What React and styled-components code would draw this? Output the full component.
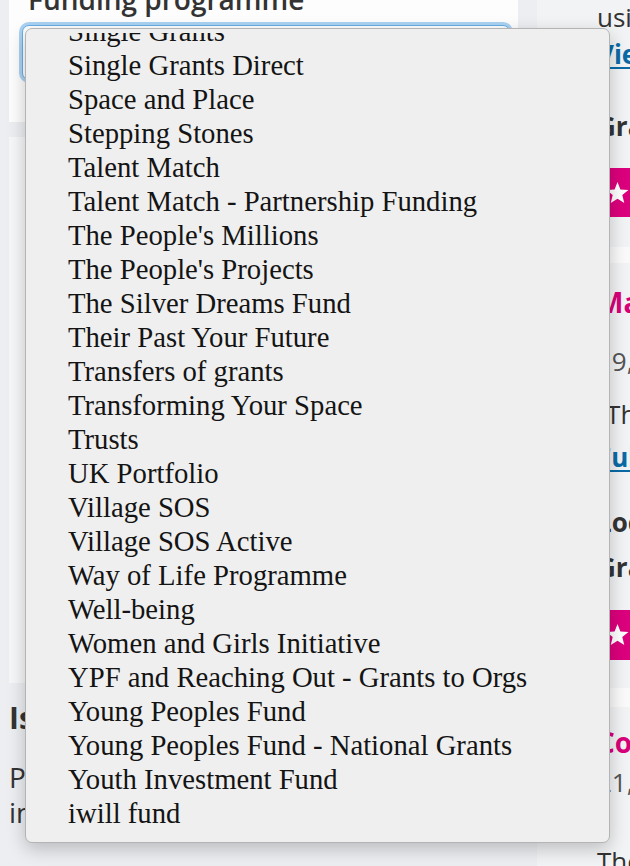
import React from 'react';
import styled, { createGlobalStyle } from 'styled-components';

const programmes = [
	'Single Grants',
	'Single Grants Direct',
	'Space and Place',
	'Stepping Stones',
	'Talent Match',
	'Talent Match - Partnership Funding',
	"The People's Millions",
	"The People's Projects",
	'The Silver Dreams Fund',
	'Their Past Your Future',
	'Transfers of grants',
	'Transforming Your Space',
	'Trusts',
	'UK Portfolio',
	'Village SOS',
	'Village SOS Active',
	'Way of Life Programme',
	'Well-being',
	'Women and Girls Initiative',
	'YPF and Reaching Out - Grants to Orgs',
	'Young Peoples Fund',
	'Young Peoples Fund - National Grants',
	'Youth Investment Fund',
	'iwill fund',
	'iwill Fund Round 2',
];

const Star = () => (
	<svg width="26" height="26" viewBox="0 0 24 24">
		<polygon
			fill="#fff"
			points="12,1.5 14.8,8.6 22.5,9.1 16.6,14 18.5,21.6 12,17.4 5.5,21.6 7.4,14 1.5,9.1 9.2,8.6"
		/>
	</svg>
);

export default function App() {
	return (
		<>
			<GlobalStyle />
			<Page>
				<LeftColumn>
					<FilterCard>
						<FieldLabel>Funding programme</FieldLabel>
						<SelectBox />
					</FilterCard>
					<ResultsCard />
					<SideHeading>Is your project eligible?</SideHeading>
					<SideText>
						Please read our guidance notes before you apply, as
						<br />
						in most cases only one application is allowed.
					</SideText>
				</LeftColumn>

				<RightColumn>
					<Line $mt={-1}>using the grant to</Line>
					<Link $mt={1}>View this project</Link>
					<Strong $mt={36}>Grant amount: £9,800</Strong>
					<Rating $mt={24} $h={49}>
						<Star />
					</Rating>
					<Divider $mt={30} $h={16} />

					<Title $mt={21}>Making Music Together</Title>
					<DateLine $mt={23}>19, 2015</DateLine>
					<Line $mt={17}>“The group will run weekly</Line>
					<Link $mt={7}>Full details</Link>
					<Strong $mt={29}>Local authority</Strong>
					<Strong $mt={9}>Grant amount: £4,500</Strong>
					<Rating $mt={25} $h={50}>
						<Star />
					</Rating>
					<Divider $mt={28} $h={19} />

					<Title $mt={17}>Community Garden</Title>
					<DateLine $mt={4}>21, 2016</DateLine>
					<Line $mt={43}>The project will</Line>
				</RightColumn>

				<Dropdown>
					<OptionViewport>
						<OptionList>
							{programmes.map((name) => (
								<Option key={name}>{name}</Option>
							))}
						</OptionList>
					</OptionViewport>
				</Dropdown>
			</Page>
		</>
	);
}

const GlobalStyle = createGlobalStyle`
	html, body {
		margin: 0;
		padding: 0;
	}
	body {
		background: #eceef1;
		font-family: "Open Sans", "Liberation Sans", sans-serif;
		color: #333;
		overflow: hidden;
	}
`;

const Page = styled.div`
	position: relative;
	display: grid;
	grid-template-columns: 509px 1fr;
	column-gap: 19px;
	padding-left: 9px;
	height: 866px;
	overflow: hidden;
`;

const LeftColumn = styled.div`
	display: flex;
	flex-direction: column;
	min-width: 0;

	& > * {
		flex-shrink: 0;
	}
`;

const FilterCard = styled.div`
	height: 122px;
	padding: 0 8px 0 13px;
	background: #fdfdfd;
	box-sizing: border-box;
`;

const FieldLabel = styled.h3`
	margin: -18px 0 0 6px;
	font-size: 28px;
	line-height: 34px;
	font-weight: 600;
	color: #333;
	white-space: nowrap;
`;

const SelectBox = styled.div`
	height: 55px;
	margin-top: 9px;
	border: 1px solid #66afe9;
	border-radius: 7px;
	background: #fff;
	box-shadow: 0 0 0 3px rgba(102, 175, 233, 0.55);
	box-sizing: border-box;
`;

const ResultsCard = styled.div`
	height: 546px;
	margin-top: 15px;
	background: #f6f7f8;
`;

const SideHeading = styled.h3`
	margin: 16px 0 0;
	font-size: 30px;
	line-height: 38px;
	font-weight: 700;
	color: #333;
	white-space: nowrap;
`;

const SideText = styled.p`
	margin: 23px 0 0;
	font-size: 28px;
	line-height: 35px;
	color: #333;
	white-space: nowrap;
`;

const RightColumn = styled.div`
	display: flex;
	flex-direction: column;
	padding-left: 60px;
	background: #f2f3f5;
	overflow: hidden;
	min-width: 0;

	& > * {
		flex-shrink: 0;
	}
`;

const Line = styled.div`
	margin-top: ${(p) => p.$mt}px;
	font-size: 26px;
	line-height: 36px;
	color: #333;
	white-space: nowrap;
`;

const DateLine = styled(Line)`
	color: #555;
`;

const Strong = styled(Line)`
	font-weight: 700;
`;

const Link = styled(Line)`
	font-weight: 700;
	color: #0a6aa6;
	text-decoration: underline;
	text-underline-offset: 3px;
`;

const Title = styled(Line)`
	font-size: 28px;
	font-weight: 700;
	color: #d8007a;
`;

const Rating = styled.div`
	display: flex;
	align-items: center;
	margin-top: ${(p) => p.$mt}px;
	height: ${(p) => p.$h}px;
	padding-left: 8px;
	background: #dc007c;
`;

const Divider = styled.div`
	margin: ${(p) => p.$mt}px 0 0 -60px;
	height: ${(p) => p.$h}px;
	background: #fafafa;
`;

const Dropdown = styled.div`
	position: absolute;
	left: 25px;
	top: 28px;
	width: 585px;
	height: 815px;
	padding: 4px 0 5px;
	box-sizing: border-box;
	background: #efefef;
	border: 1px solid #b4b4b4;
	border-radius: 7px;
	box-shadow: 0 6px 18px rgba(0, 0, 0, 0.22);
`;

const OptionViewport = styled.div`
	height: 100%;
	overflow: hidden;
`;

const OptionList = styled.ul`
	list-style: none;
	margin: -19px 0 0;
	padding: 0;
`;

const Option = styled.li`
	padding-left: 42px;
	font-family: "Liberation Serif", "Times New Roman", serif;
	font-size: 28.7px;
	line-height: 34px;
	color: #141414;
	white-space: nowrap;
`;
